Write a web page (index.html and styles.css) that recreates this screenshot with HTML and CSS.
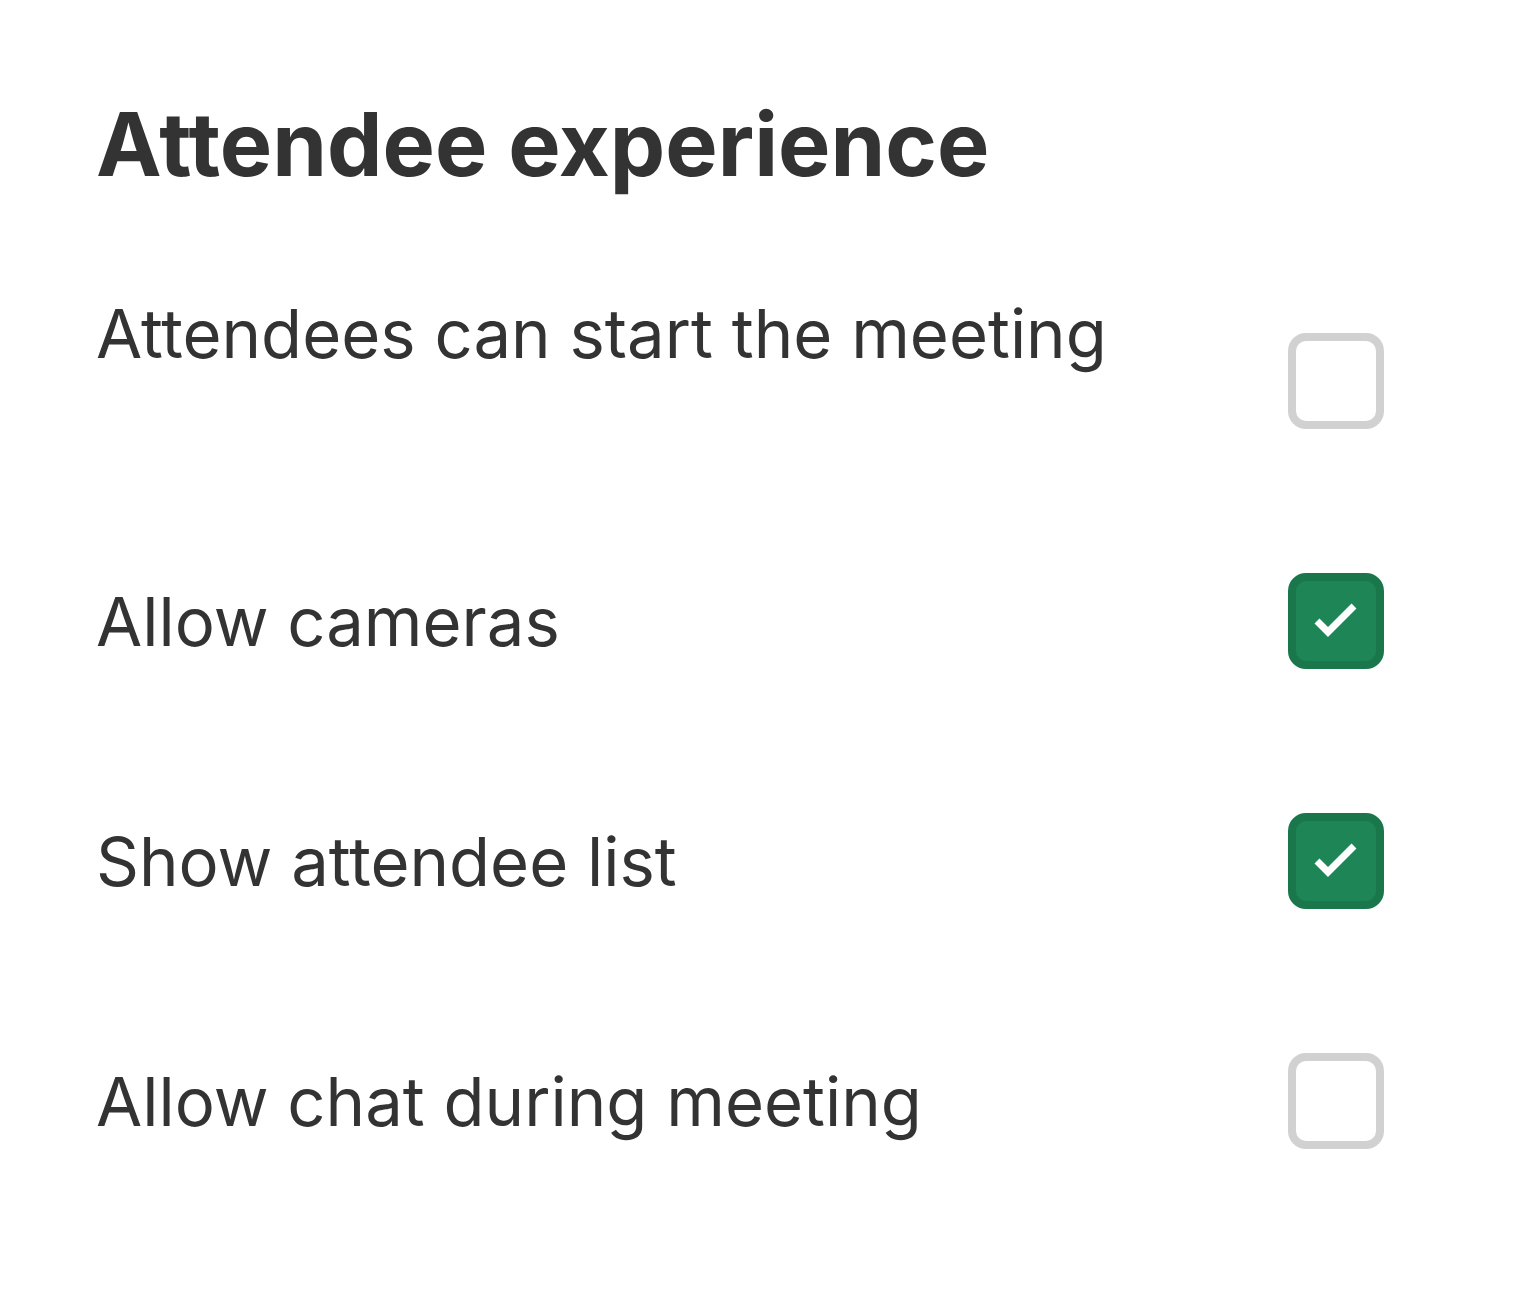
FILE: index.html
```html
<!DOCTYPE html>
<html lang="en">
<head>
    <meta charset="UTF-8">
    <meta name="viewport" content="width=device-width, initial-scale=1.0">
    <title>Attendee experience</title>
    <link rel="stylesheet" href="styles.css">
</head>
<body>
    <section class="panel">
        <h2 class="panel-title">Attendee experience</h2>

        <div class="setting setting-first">
            <label for="canStart">Attendees can start the meeting</label>
            <input type="checkbox" id="canStart" name="canStart">
        </div>

        <div class="setting">
            <label for="cameras">Allow cameras</label>
            <input type="checkbox" id="cameras" name="cameras" checked>
        </div>

        <div class="setting">
            <label for="attendeeList">Show attendee list</label>
            <input type="checkbox" id="attendeeList" name="attendeeList" checked>
        </div>

        <div class="setting">
            <label for="chat">Allow chat during meeting</label>
            <input type="checkbox" id="chat" name="chat">
        </div>
    </section>
</body>
</html>
```

FILE: styles.css
```css
body {
    margin: 0;
    font-family: Inter, "Noto Sans", sans-serif;
    color: #333;
    background: #fff;
}

.panel {
    padding: 91px 144px 0 96px;
}

.panel-title {
    margin: 0 0 64px;
    font-size: 88px;
    font-weight: 700;
    line-height: 106px;
}

.setting {
    display: flex;
    align-items: center;
    justify-content: space-between;
    height: 240px;
}

.setting label {
    font-size: 67px;
    line-height: normal;
}

/* first label sits higher than its box */
.setting-first label {
    margin-bottom: 96px;
}

.setting input[type="checkbox"] {
    appearance: none;
    margin: 0;
    width: 96px;
    height: 96px;
    box-sizing: border-box;
    border: 8px solid #d1d1d1;
    border-radius: 18px;
    background: #fff;
    cursor: pointer;
    flex-shrink: 0;
}

.setting input[type="checkbox"]:checked {
    border-color: #1a774b;
    background-color: #1e8656;
    background-image: url("data:image/svg+xml,%3Csvg xmlns='http://www.w3.org/2000/svg' viewBox='0 0 80 80'%3E%3Cpath d='M21 40 L32 51 L58 25' fill='none' stroke='%23fff' stroke-width='7'/%3E%3C/svg%3E");
    background-size: 100% 100%;
}
```
